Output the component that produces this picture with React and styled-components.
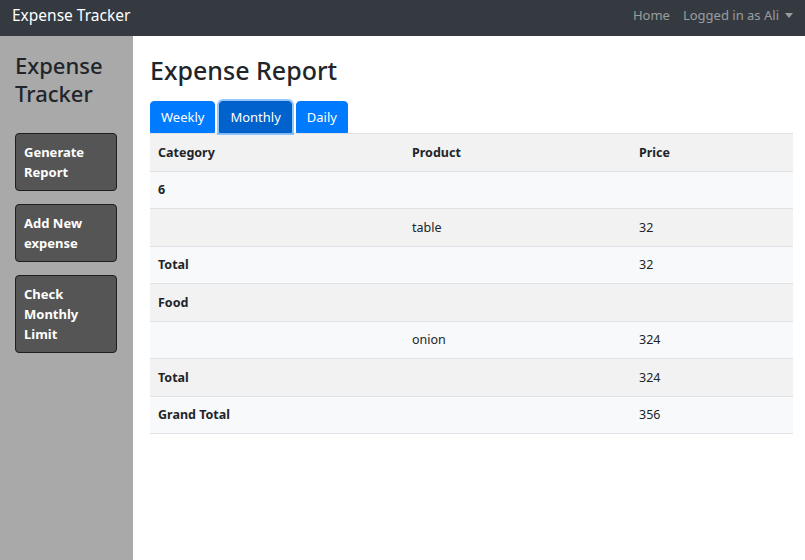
import { createGlobalStyle, styled } from "styled-components";

const Global = createGlobalStyle`
    html, body { margin: 0; padding: 0; }
    body {
        font-family: "Noto Sans", "Open Sans", sans-serif;
        color: #212529;
        background: #fff;
    }
    * { box-sizing: border-box; }
`

const Navbar = styled.nav`
    height: 36px;
    background-color: #343a40;
    display: flex;
    align-items: center;
    justify-content: space-between;
    padding: 0 12px;
`

const Brand = styled.div`
    color: #fff;
    font-size: 15.5px;
    margin-top: -6px;
`

const NavLinks = styled.div`
    display: flex;
    align-items: center;
    gap: 13px;
    margin-top: -6px;
    font-size: 13px;
    color: rgba(255, 255, 255, 0.5);
`

const Caret = styled.span`
    display: inline-block;
    margin-left: 6px;
    border-top: 5px solid rgba(255, 255, 255, 0.5);
    border-left: 4px solid transparent;
    border-right: 4px solid transparent;
    vertical-align: 2px;
`

const Layout = styled.div`
    display: flex;
    min-height: 524px;
`

const Sidebar = styled.aside`
    width: 133px;
    background-color: #a9a9a9;
    padding: 15px;
    display: flex;
    flex-direction: column;
    align-items: flex-start;
`

const SideTitle = styled.h3`
    margin: 0 0 26px 0;
    font-weight: 500;
    font-size: 22px;
    line-height: 28px;
    color: #212529;
`

const SideButton = styled.button`
    width: 102px;
    background-color: #555;
    color: #fff;
    border: 1px solid #1e1e1e;
    border-radius: 4px;
    font-family: inherit;
    font-weight: bold;
    font-size: 13px;
    line-height: 20px;
    text-align: left;
    padding: 8px 8px;
    margin-bottom: 13px;
`

const Main = styled.main`
    flex: 1;
    padding: 14px 12px 0 17px;
`

const Title = styled.h2`
    margin: 0 0 11px 0;
    font-weight: 500;
    font-size: 25px;
    line-height: 40px;
`

const ButtonRow = styled.div`
    display: flex;
    gap: 4px;
`

const TabButton = styled.button`
    background-color: ${p => p.$active ? "#0062cc" : "#007bff"};
    border: 1px solid ${p => p.$active ? "#005cbf" : "#007bff"};
    box-shadow: ${p => p.$active ? "0 0 0 2px rgba(38, 143, 255, 0.5)" : "none"};
    color: #fff;
    font-family: inherit;
    font-size: 13px;
    height: 32px;
    padding: 0 10px;
    border-radius: 4px 4px 0 0;
`

const Table = styled.table`
    width: 100%;
    border-collapse: collapse;
    font-size: 12.5px;
    table-layout: fixed;
    tr:nth-child(odd) { background-color: #f8f9fa; }
    tr:nth-child(even) { background-color: #f2f2f2; }
    th, td {
        height: 37.5px;
        padding: 0 8px;
        text-align: left;
        border-bottom: 1px solid #dee2e6;
    }
    thead tr { background-color: #f2f2f2 !important; }
    thead th { border-top: 1px solid #dee2e6; }
`

const Bold = styled.td`
    font-weight: bold;
`

const rows = [
    { cat: "6", bold: true },
    { prod: "table", price: "32" },
    { cat: "Total", price: "32", bold: true },
    { cat: "Food", bold: true },
    { prod: "onion", price: "324" },
    { cat: "Total", price: "324", bold: true },
    { cat: "Grand Total", price: "356", bold: true },
]

export default function App() {
    return (
        <>
            <Global />
            <Navbar>
                <Brand>Expense Tracker</Brand>
                <NavLinks>
                    <span>Home</span>
                    <span>Logged in as Ali<Caret /></span>
                </NavLinks>
            </Navbar>
            <Layout>
                <Sidebar>
                    <SideTitle>Expense<br />Tracker</SideTitle>
                    <SideButton>Generate Report</SideButton>
                    <SideButton>Add New expense</SideButton>
                    <SideButton>Check Monthly Limit</SideButton>
                </Sidebar>
                <Main>
                    <Title>Expense Report</Title>
                    <ButtonRow>
                        <TabButton>Weekly</TabButton>
                        <TabButton $active>Monthly</TabButton>
                        <TabButton>Daily</TabButton>
                    </ButtonRow>
                    <Table>
                        <colgroup>
                            <col style={{ width: "254px" }} />
                            <col style={{ width: "227px" }} />
                            <col />
                        </colgroup>
                        <thead>
                            <tr>
                                <th>Category</th>
                                <th>Product</th>
                                <th>Price</th>
                            </tr>
                        </thead>
                        <tbody>
                            {rows.map((r, i) => (
                                <tr key={i}>
                                    {r.bold ? <Bold>{r.cat}</Bold> : <td>{r.cat}</td>}
                                    <td>{r.prod}</td>
                                    <td>{r.price}</td>
                                </tr>
                            ))}
                        </tbody>
                    </Table>
                </Main>
            </Layout>
        </>
    )
}
